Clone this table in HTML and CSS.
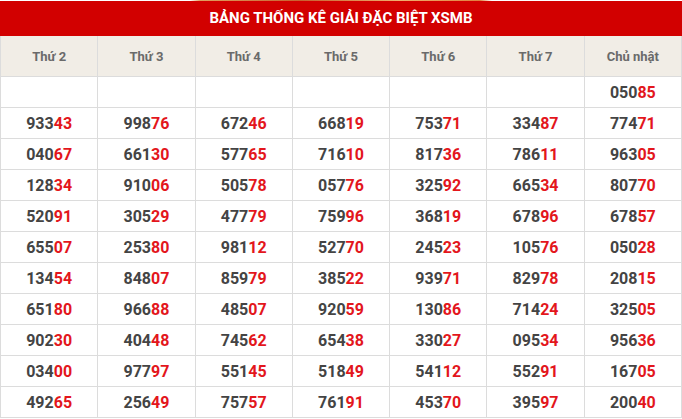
FILE: index.html
```html
<!DOCTYPE html>
<html lang="vi">
<head>
<meta charset="utf-8">
<title>Bảng thống kê giải đặc biệt XSMB</title>
<link rel="stylesheet" href="styles.css">
</head>
<body>
<div class="wrap">
  <div class="strip"></div>
  <div class="title">BẢNG THỐNG KÊ GIẢI ĐẶC BIỆT XSMB</div>
  <table class="stats">
    <thead>
      <tr><th>Thứ 2</th><th>Thứ 3</th><th>Thứ 4</th><th>Thứ 5</th><th>Thứ 6</th><th>Thứ 7</th><th>Chủ nhật</th></tr>
    </thead>
    <tbody>
      <tr><td></td><td></td><td></td><td></td><td></td><td></td><td>050<b>85</b></td></tr>
      <tr><td>933<b>43</b></td><td>998<b>76</b></td><td>672<b>46</b></td><td>668<b>19</b></td><td>753<b>71</b></td><td>334<b>87</b></td><td>774<b>71</b></td></tr>
      <tr><td>040<b>67</b></td><td>661<b>30</b></td><td>577<b>65</b></td><td>716<b>10</b></td><td>817<b>36</b></td><td>786<b>11</b></td><td>963<b>05</b></td></tr>
      <tr><td>128<b>34</b></td><td>910<b>06</b></td><td>505<b>78</b></td><td>057<b>76</b></td><td>325<b>92</b></td><td>665<b>34</b></td><td>807<b>70</b></td></tr>
      <tr><td>520<b>91</b></td><td>305<b>29</b></td><td>477<b>79</b></td><td>759<b>96</b></td><td>368<b>19</b></td><td>678<b>96</b></td><td>678<b>57</b></td></tr>
      <tr><td>655<b>07</b></td><td>253<b>80</b></td><td>981<b>12</b></td><td>527<b>70</b></td><td>245<b>23</b></td><td>105<b>76</b></td><td>050<b>28</b></td></tr>
      <tr><td>134<b>54</b></td><td>848<b>07</b></td><td>859<b>79</b></td><td>385<b>22</b></td><td>939<b>71</b></td><td>829<b>78</b></td><td>208<b>15</b></td></tr>
      <tr><td>651<b>80</b></td><td>966<b>88</b></td><td>485<b>07</b></td><td>920<b>59</b></td><td>130<b>86</b></td><td>714<b>24</b></td><td>325<b>05</b></td></tr>
      <tr><td>902<b>30</b></td><td>404<b>48</b></td><td>745<b>62</b></td><td>654<b>38</b></td><td>330<b>27</b></td><td>095<b>34</b></td><td>956<b>36</b></td></tr>
      <tr><td>034<b>00</b></td><td>977<b>97</b></td><td>551<b>45</b></td><td>518<b>49</b></td><td>541<b>12</b></td><td>552<b>91</b></td><td>167<b>05</b></td></tr>
      <tr><td>492<b>65</b></td><td>256<b>49</b></td><td>757<b>57</b></td><td>761<b>91</b></td><td>453<b>70</b></td><td>395<b>97</b></td><td>200<b>40</b></td></tr>
    </tbody>
  </table>
</div>
</body>
</html>
```
FILE: styles.css
```css
html, body { margin: 0; padding: 0; background: #fff; }
body { font-family: Roboto, "Liberation Sans", Arial, sans-serif; }
.wrap { width: 682px; position: relative; }
.strip {
  height: 1px;
  background: linear-gradient(90deg, #fff 0, #fff 190px, #e0a060 200px, #c86030 300px, #f0b070 400px, #e08040 480px, #fff 492px, #fff 100%);
}
.title {
  height: 35px;
  line-height: 35px;
  background: #d20000;
  color: #fff;
  font-weight: 700;
  font-size: 15px;
  text-align: center;
}
.stats {
  width: 682px;
  border-collapse: collapse;
  table-layout: fixed;
}
.stats th, .stats td {
  border: 1px solid #dcdcdc;
  text-align: center;
  padding: 0;
}
.stats th {
  height: 40px;
  background: #f1ede6;
  color: #6a6a6a;
  font-size: 13px;
  font-weight: 700;
  border-top: 0;
}
.stats td {
  height: 30px;
  color: #444;
  font-size: 16px;
  font-weight: 700;
}
.stats td b { color: #e3161c; font-weight: 700; }
```
